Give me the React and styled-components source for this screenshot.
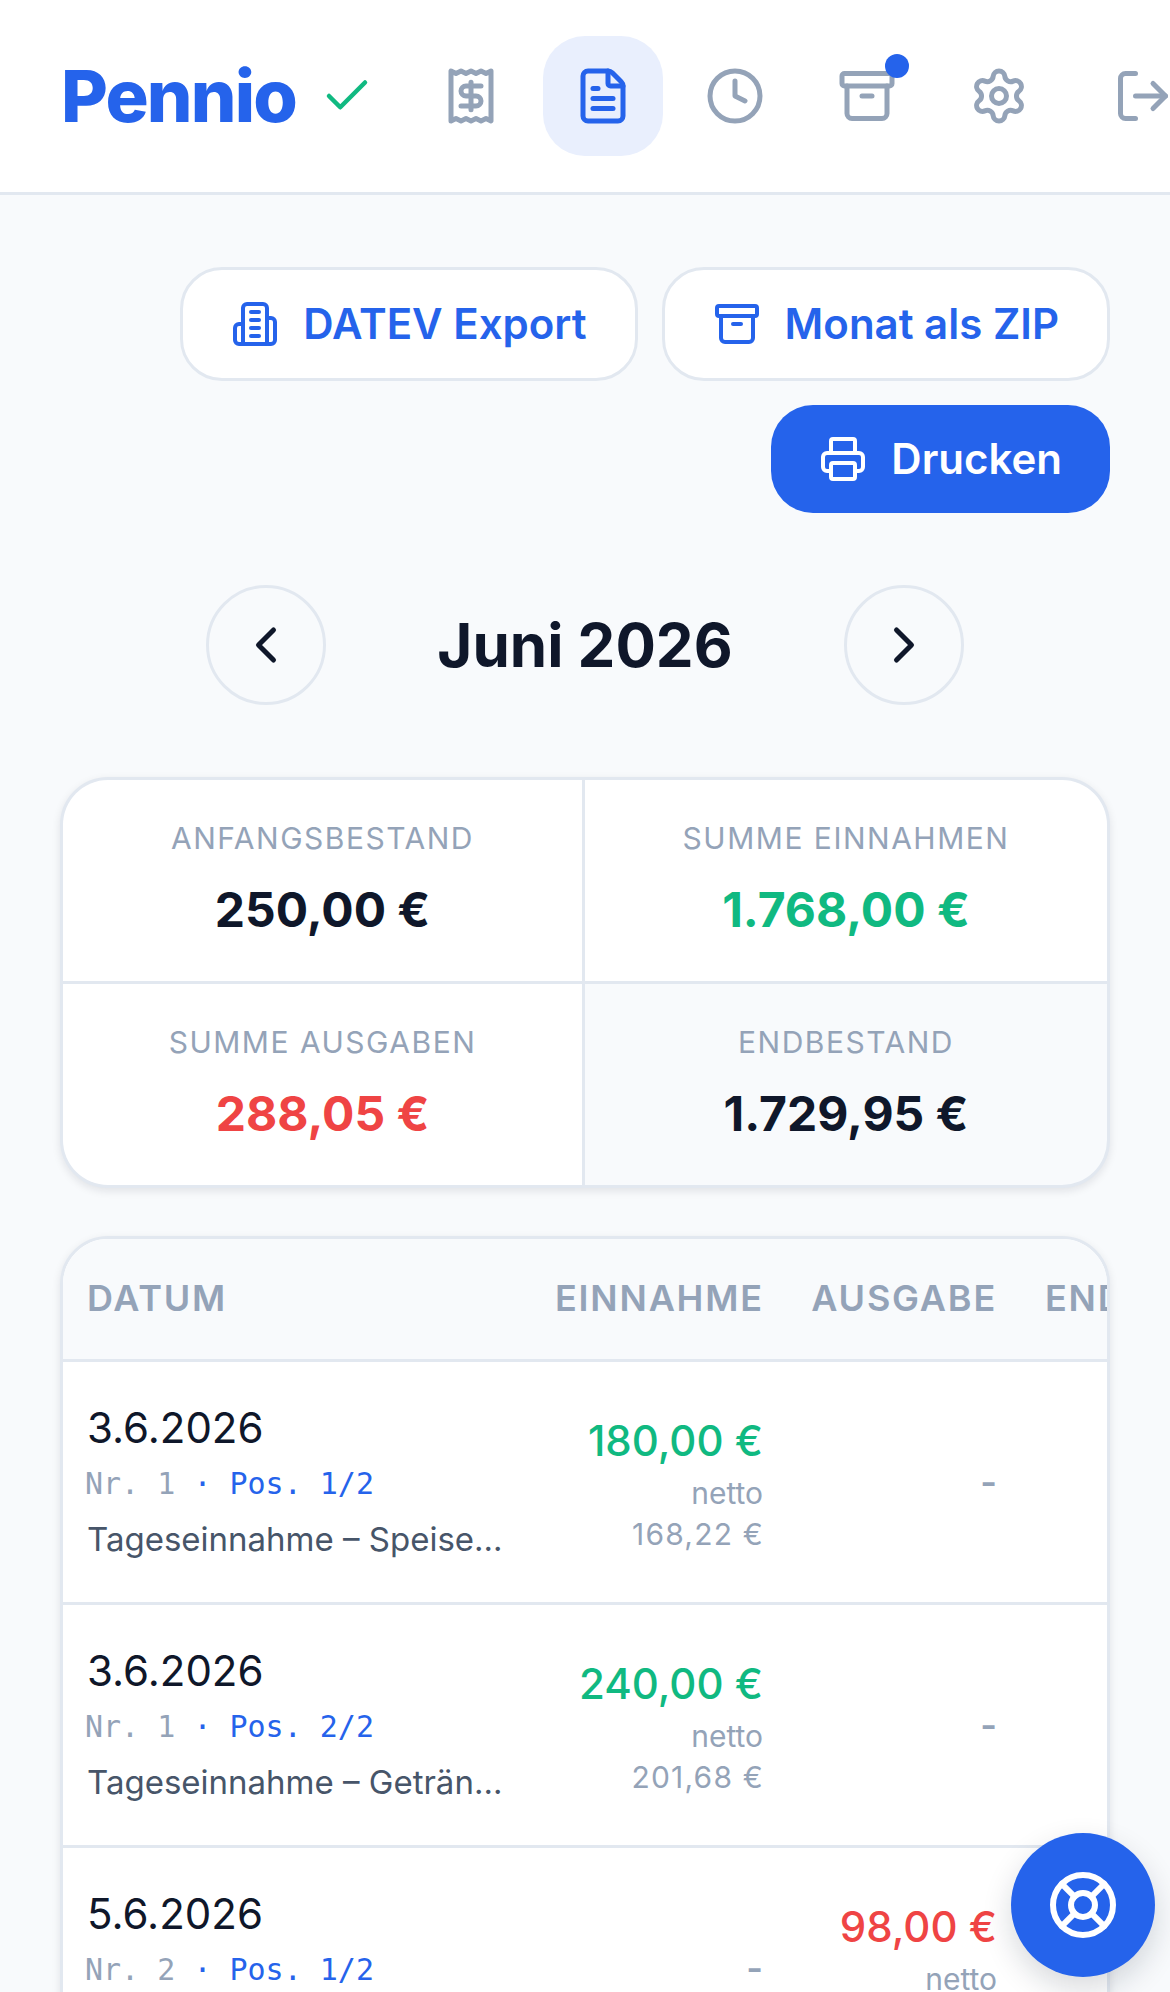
import React from 'react';
import styled, { createGlobalStyle } from 'styled-components';
import {
  Archive,
  Check,
  ChevronLeft,
  ChevronRight,
  Clock,
  FileText,
  LifeBuoy,
  LogOut,
  Printer,
  Receipt,
  Settings,
} from 'lucide-react';

const Global = createGlobalStyle`
  html, body { margin: 0; padding: 0; background: #f8fafc; }
  body { font-family: Inter, "Liberation Sans", sans-serif; color: #0f172a; }
  * { box-sizing: border-box; }
`;

const Page = styled.div`
  width: 1170px;
  height: 1992px;
  overflow: hidden;
  background: #f8fafc;
`;

const Header = styled.header`
  display: flex;
  align-items: center;
  height: 195px;
  padding-left: 61px;
  background: #fff;
  border-bottom: 3px solid #e2e8f0;
  overflow: hidden;
`;

const Logo = styled.div`
  font-size: 72px;
  font-weight: 800;
  letter-spacing: -1.8px;
  color: #2563eb;
  line-height: 1;
`;

const Verified = styled(Check)`
  margin-left: 24px;
  margin-right: 37px;
  flex-shrink: 0;
  color: #10b981;
`;

const Nav = styled.nav`
  display: flex;
  gap: 12px;
`;

const NavButton = styled.div`
  position: relative;
  flex-shrink: 0;
  display: flex;
  align-items: center;
  justify-content: center;
  width: 120px;
  height: 120px;
  margin-left: ${(p) => (p.$pushed ? '12px' : '0')};
  border-radius: 42px;
  color: ${(p) => (p.$active ? '#2563eb' : '#94a3b8')};
  background: ${(p) => (p.$active ? '#e9effd' : 'transparent')};
`;

const Dot = styled.span`
  position: absolute;
  top: 18px;
  right: 18px;
  width: 24px;
  height: 24px;
  border-radius: 50%;
  background: #2563eb;
`;

const Main = styled.main`
  padding: 72px 60px 0;
`;

const Actions = styled.div`
  display: flex;
  flex-wrap: wrap;
  justify-content: flex-end;
  gap: 24px;
`;

const ActionButton = styled.div`
  display: flex;
  align-items: center;
  gap: 24px;
  padding: 30px 48px;
  font-size: 42px;
  line-height: 48px;
  font-weight: 600;
  border-radius: 42px;
  border: ${(p) => (p.$primary ? 'none' : '3px solid #e2e8f0')};
  color: ${(p) => (p.$primary ? '#fff' : '#2563eb')};
  background: ${(p) => (p.$primary ? '#2563eb' : '#fff')};
`;

const MonthNav = styled.div`
  display: flex;
  align-items: center;
  justify-content: center;
  gap: 111px;
  margin-top: 72px;
`;

const RoundButton = styled.div`
  display: flex;
  align-items: center;
  justify-content: center;
  width: 120px;
  height: 120px;
  border-radius: 50%;
  border: 3px solid #e2e8f0;
  color: #0f172a;
`;

const MonthTitle = styled.h2`
  margin: 0;
  font-size: 60px;
  line-height: 72px;
  font-weight: 700;
  color: #0f172a;
`;

const Summary = styled.section`
  display: grid;
  grid-template-columns: 519px 1fr;
  margin-top: 72px;
  background: #e2e8f0;
  gap: 3px;
  border: 3px solid #e2e8f0;
  border-radius: 48px;
  overflow: hidden;
  box-shadow: 0 3px 9px rgba(15, 23, 42, 0.1);
`;

const SummaryCell = styled.div`
  display: flex;
  flex-direction: column;
  align-items: center;
  height: 201px;
  padding-top: 40px;
  background: ${(p) => (p.$tinted ? '#f8fafc' : '#fff')};
`;

const SummaryLabel = styled.div`
  font-size: 30px;
  line-height: 36px;
  letter-spacing: 1.5px;
  color: #94a3b8;
`;

const SummaryValue = styled.div`
  margin-top: 18px;
  font-size: 48px;
  line-height: 72px;
  font-weight: 700;
  color: ${(p) => p.$color || '#0f172a'};
`;

const TableCard = styled.section`
  margin-top: 48px;
  background: #fff;
  border: 3px solid #e2e8f0;
  border-radius: 48px;
  overflow: hidden;
  box-shadow: 0 3px 9px rgba(15, 23, 42, 0.1);
`;

const Table = styled.table`
  width: 1400px;
  table-layout: fixed;
  border-collapse: collapse;
`;

const HeadCell = styled.th`
  height: 121px;
  padding: 0 24px 2px;
  font-size: 36px;
  font-weight: 600;
  letter-spacing: 1.8px;
  text-align: ${(p) => (p.$left ? 'left' : 'right')};
  color: #94a3b8;
  background: #f8fafc;
  border-bottom: 3px solid #e2e8f0;
  white-space: nowrap;
`;

const Cell = styled.td`
  padding: 34px 24px 36px;
  text-align: ${(p) => (p.$left ? 'left' : 'right')};
  vertical-align: middle;
  border-bottom: 3px solid #e2e8f0;
`;

const DateText = styled.div`
  font-size: 42px;
  line-height: 63px;
  color: #0f172a;
`;

const Meta = styled.div`
  font-family: "DejaVu Sans Mono", "Liberation Mono", monospace;
  font-size: 30px;
  line-height: 45px;
  margin: 2px 0 0 -2px;
  color: #94a3b8;
`;

const Pos = styled.span`
  color: #2563eb;
`;

const Description = styled.div`
  margin-top: 6px;
  width: 416px;
  font-size: 33px;
  line-height: 54px;
  color: #475569;
  white-space: nowrap;
  overflow: hidden;
  text-overflow: ellipsis;
`;

const Amount = styled.div`
  font-size: 42px;
  line-height: 63px;
  font-weight: 500;
  color: ${(p) => (p.$out ? '#ef4444' : '#10b981')};
`;

const NetLabel = styled.div`
  font-size: 30px;
  line-height: 43px;
  color: #94a3b8;
`;

const NetValue = styled.div`
  font-size: 30px;
  line-height: 38px;
  letter-spacing: 1.2px;
  margin-right: -1px;
  color: #94a3b8;
`;

const Dash = styled.span`
  position: relative;
  top: 1px;
  font-size: 36px;
  line-height: 54px;
  font-weight: 600;
  color: #94a3b8;
`;

const HelpButton = styled.div`
  position: fixed;
  right: 15px;
  bottom: 15px;
  display: flex;
  align-items: center;
  justify-content: center;
  width: 144px;
  height: 144px;
  border-radius: 50%;
  color: #fff;
  background: #2563eb;
  box-shadow: 0 12px 30px rgba(15, 23, 42, 0.16);
`;

function TowerIcon({ size }) {
  return (
    <svg width={size} height={size} viewBox="0 0 24 24" fill="none" stroke="currentColor" strokeWidth="2" strokeLinecap="round" strokeLinejoin="round">
      <path d="M6 22V4a2 2 0 0 1 2-2h8a2 2 0 0 1 2 2v18Z" />
      <path d="M6 12H4a2 2 0 0 0-2 2v6a2 2 0 0 0 2 2h2" />
      <path d="M18 9h2a2 2 0 0 1 2 2v9a2 2 0 0 1-2 2h-2" />
      <path d="M10 6h4" />
      <path d="M10 10h4" />
      <path d="M10 14h4" />
      <path d="M10 18h4" />
    </svg>
  );
}

const navItems = [
  { icon: Receipt },
  { icon: FileText, active: true },
  { icon: Clock },
  { icon: Archive, dot: true },
  { icon: Settings },
  { icon: LogOut, pushed: true },
];

const summary = [
  { label: 'ANFANGSBESTAND', value: '250,00 €' },
  { label: 'SUMME EINNAHMEN', value: '1.768,00 €', color: '#10b981' },
  { label: 'SUMME AUSGABEN', value: '288,05 €', color: '#ef4444' },
  { label: 'ENDBESTAND', value: '1.729,95 €', tinted: true },
];

const rows = [
  { date: '3.6.2026', nr: 1, pos: '1/2', text: 'Tageseinnahme – Speisen 7%', gross: '180,00 €', net: '168,22 €' },
  { date: '3.6.2026', nr: 1, pos: '2/2', text: 'Tageseinnahme – Getränke 19%', gross: '240,00 €', net: '201,68 €' },
  { date: '5.6.2026', nr: 2, pos: '1/2', text: 'Wareneinkauf Großmarkt', gross: '98,00 €', net: '91,59 €', out: true },
];

function Money({ gross, net, out }) {
  return (
    <>
      <Amount $out={out}>{gross}</Amount>
      <NetLabel>netto</NetLabel>
      <NetValue>{net}</NetValue>
    </>
  );
}

export default function App() {
  return (
    <Page>
      <Global />
      <Header>
        <Logo>Pennio</Logo>
        <Verified size={54} />
        <Nav>
          {navItems.map((item, i) => (
            <NavButton key={i} $active={item.active} $pushed={item.pushed}>
              <item.icon size={60} />
              {item.dot && <Dot />}
            </NavButton>
          ))}
        </Nav>
      </Header>
      <Main>
        <Actions>
          <ActionButton>
            <TowerIcon size={48} />
            DATEV Export
          </ActionButton>
          <ActionButton>
            <Archive size={48} />
            Monat als ZIP
          </ActionButton>
          <ActionButton $primary>
            <Printer size={48} />
            Drucken
          </ActionButton>
        </Actions>
        <MonthNav>
          <RoundButton>
            <ChevronLeft size={60} />
          </RoundButton>
          <MonthTitle>Juni 2026</MonthTitle>
          <RoundButton>
            <ChevronRight size={60} />
          </RoundButton>
        </MonthNav>
        <Summary>
          {summary.map((s) => (
            <SummaryCell key={s.label} $tinted={s.tinted}>
              <SummaryLabel>{s.label}</SummaryLabel>
              <SummaryValue $color={s.color}>{s.value}</SummaryValue>
            </SummaryCell>
          ))}
        </Summary>
        <TableCard>
          <Table>
            <colgroup>
              <col width="468" />
              <col width="256" />
              <col width="234" />
              <col width="442" />
            </colgroup>
            <thead>
              <tr>
                <HeadCell $left>DATUM</HeadCell>
                <HeadCell>EINNAHME</HeadCell>
                <HeadCell>AUSGABE</HeadCell>
                <HeadCell $left>ENDBESTAND</HeadCell>
              </tr>
            </thead>
            <tbody>
              {rows.map((r) => (
                <tr key={r.date + r.pos}>
                  <Cell $left>
                    <DateText>{r.date}</DateText>
                    <Meta>
                      Nr. {r.nr} <Pos>· Pos. {r.pos}</Pos>
                    </Meta>
                    <Description>{r.text}</Description>
                  </Cell>
                  <Cell>{r.out ? <Dash>-</Dash> : <Money {...r} />}</Cell>
                  <Cell>{r.out ? <Money {...r} /> : <Dash>-</Dash>}</Cell>
                  <Cell $left />
                </tr>
              ))}
            </tbody>
          </Table>
        </TableCard>
      </Main>
      <HelpButton>
        <LifeBuoy size={72} />
      </HelpButton>
    </Page>
  );
}
